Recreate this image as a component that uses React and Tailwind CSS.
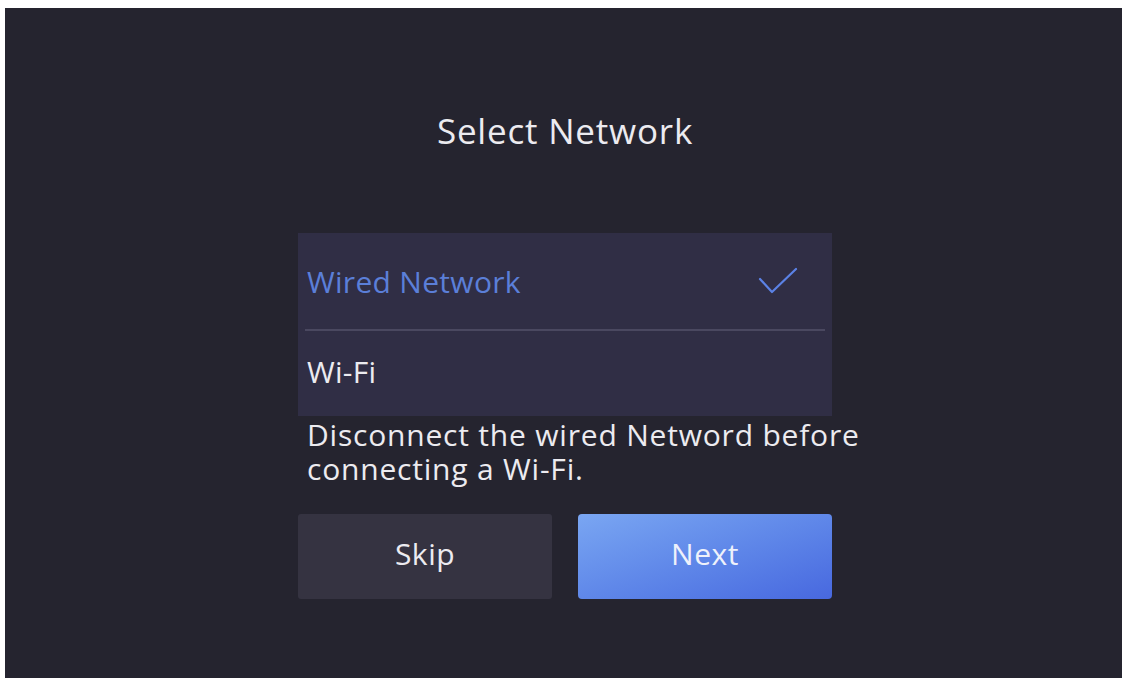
import React, { useState } from 'react';

const OPTIONS = [
  { id: 'wired', label: 'Wired Network' },
  { id: 'wifi', label: 'Wi-Fi' },
];

function Check() {
  return (
    <svg width="40" height="30" viewBox="0 0 40 30" fill="none">
      <path d="M2 13 L14 26 L38 3" stroke="#5b82e6" strokeWidth="2.2" strokeLinecap="round" strokeLinejoin="round" />
    </svg>
  );
}

export default function App() {
  const [selected, setSelected] = useState('wired');

  return (
    <div className="h-[678px] w-[1126px] bg-white pl-[5px] pr-[4px] pt-[8px]" style={{ fontFamily: '"Open Sans", "Noto Sans", sans-serif' }}>
      <div className="flex h-full flex-col items-center bg-[#25242f] pt-[103px] pl-[3px]">
        <h1 className="text-[35px] leading-[40px] font-normal tracking-[0.8px] text-[#ecebf0]">Select Network</h1>

        {/* Network list */}
        <div className="mt-[82px] w-[534px] bg-[#302e45]">
          <button
            type="button"
            onClick={() => setSelected('wired')}
            className={`flex h-[96px] w-full items-center justify-between pl-[9px] pr-[34px] text-left text-[30px] tracking-[0.3px] ${selected === 'wired' ? 'text-[#5b7fd8]' : 'text-[#ecebf0]'}`}
          >
            <span>{OPTIONS[0].label}</span>
            {selected === 'wired' && <Check />}
          </button>
          <div className="mx-[7px] h-[2px] bg-[#4a4860]" />
          <button
            type="button"
            onClick={() => setSelected('wifi')}
            className={`flex h-[85px] w-full items-center justify-between pb-[5px] pl-[9px] pr-[34px] text-left text-[30px] tracking-[0.3px] ${selected === 'wifi' ? 'text-[#5b7fd8]' : 'text-[#ecebf0]'}`}
          >
            <span>{OPTIONS[1].label}</span>
            {selected === 'wifi' && <Check />}
          </button>
        </div>

        <div className="mt-[2px] w-[534px] pl-[9px] text-[30px] leading-[34px] tracking-[0.8px] text-[#ecebf0]">
          <p className="w-[600px]">Disconnect the wired Netword before<br />connecting a Wi-Fi.</p>
        </div>

        {/* Actions */}
        <div className="mt-[28px] flex w-[534px] gap-[26px]">
          <button type="button" className="h-[85px] w-[254px] rounded-[3px] bg-[#353341] pb-[6px] text-[30px] tracking-[0.5px] text-[#ecebf0]">
            Skip
          </button>
          <button type="button" className="h-[85px] w-[254px] rounded-[4px] bg-gradient-to-br from-[#7aa6f2] to-[#4868df] pb-[6px] text-[30px] tracking-[0.5px] text-[#eef1fb]">
            Next
          </button>
        </div>
      </div>
    </div>
  );
}
